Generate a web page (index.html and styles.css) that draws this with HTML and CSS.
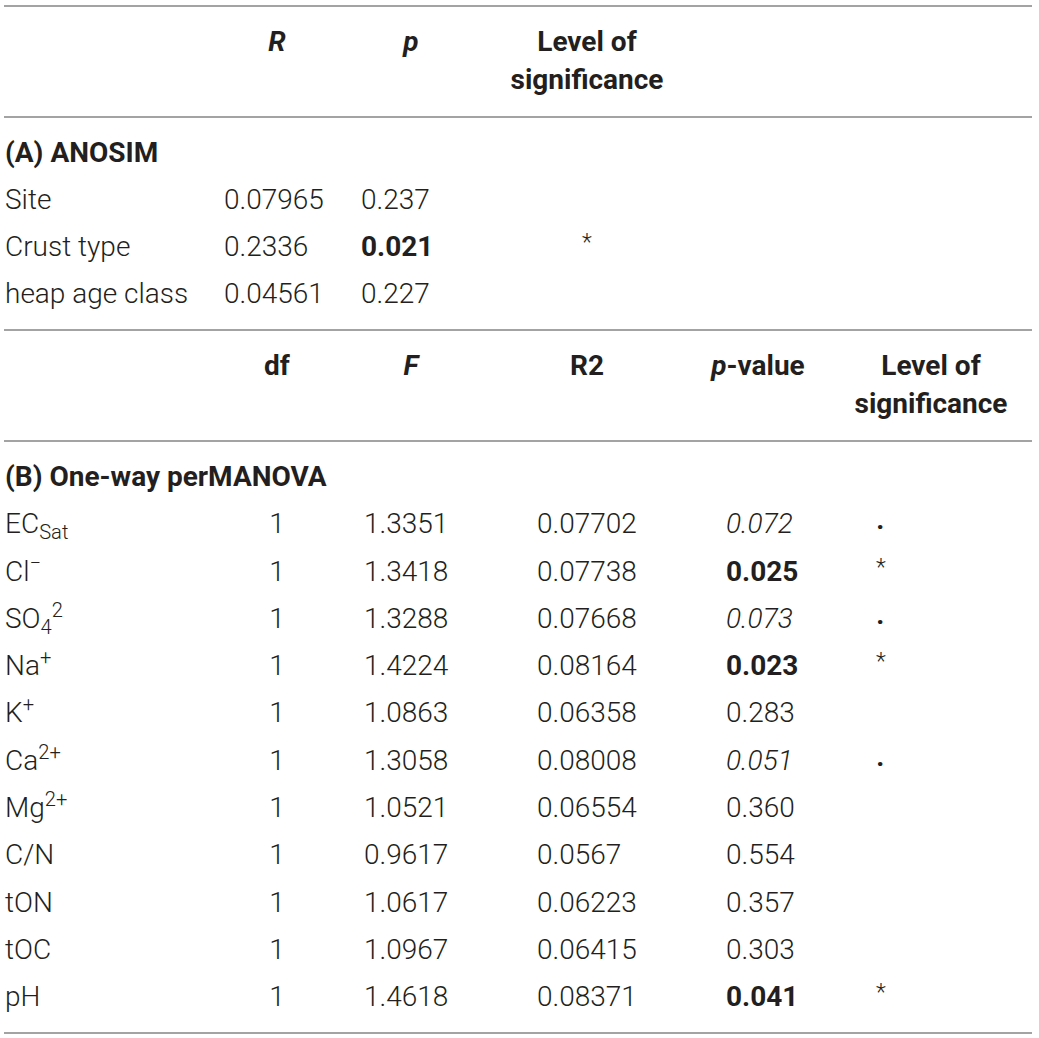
FILE: index.html
```html
<!DOCTYPE html>
<html lang="en">
<head>
  <meta charset="UTF-8" />
  <title>ANOSIM and perMANOVA results</title>
  <link rel="stylesheet" href="styles.css">
</head>
<body>
  <table class="stats">
    <colgroup>
      <col class="c1">
      <col class="c2">
      <col class="c3">
      <col class="c4">
      <col class="c5">
      <col class="c6">
    </colgroup>

    <tbody class="head">
      <tr>
        <th></th>
        <th><i>R</i></th>
        <th><i>p</i></th>
        <th>Level of<br>significance</th>
        <th></th>
        <th></th>
      </tr>
    </tbody>

    <tbody class="block">
      <tr class="section"><td colspan="6">(A) ANOSIM</td></tr>
      <tr>
        <td>Site</td>
        <td class="a2">0.07965</td>
        <td class="a3">0.237</td>
        <td class="mid"></td><td></td><td></td>
      </tr>
      <tr>
        <td>Crust type</td>
        <td class="a2">0.2336</td>
        <td class="a3"><b>0.021</b></td>
        <td class="mid"><span class="star">*</span></td><td></td><td></td>
      </tr>
      <tr>
        <td>heap age class</td>
        <td class="a2">0.04561</td>
        <td class="a3">0.227</td>
        <td class="mid"></td><td></td><td></td>
      </tr>
    </tbody>

    <tbody class="head">
      <tr>
        <th></th>
        <th>df</th>
        <th><i>F</i></th>
        <th>R2</th>
        <th><i>p</i>-value</th>
        <th>Level of<br>significance</th>
      </tr>
    </tbody>

    <tbody class="block b-long">
      <tr class="section"><td colspan="6">(B) One-way perMANOVA</td></tr>
      <tr><td>EC<sub>Sat</sub></td><td class="mid">1</td><td class="b3">1.3351</td><td class="b4">0.07702</td><td class="b5"><i>0.072</i></td><td class="b6"><span class="dot">·</span></td></tr>
      <tr><td>Cl<sup>−</sup></td><td class="mid">1</td><td class="b3">1.3418</td><td class="b4">0.07738</td><td class="b5"><b>0.025</b></td><td class="b6"><span class="star">*</span></td></tr>
      <tr><td>SO<sub>4</sub><sup>2</sup></td><td class="mid">1</td><td class="b3">1.3288</td><td class="b4">0.07668</td><td class="b5"><i>0.073</i></td><td class="b6"><span class="dot">·</span></td></tr>
      <tr><td>Na<sup>+</sup></td><td class="mid">1</td><td class="b3">1.4224</td><td class="b4">0.08164</td><td class="b5"><b>0.023</b></td><td class="b6"><span class="star">*</span></td></tr>
      <tr><td>K<sup>+</sup></td><td class="mid">1</td><td class="b3">1.0863</td><td class="b4">0.06358</td><td class="b5">0.283</td><td class="b6"></td></tr>
      <tr><td>Ca<sup>2+</sup></td><td class="mid">1</td><td class="b3">1.3058</td><td class="b4">0.08008</td><td class="b5"><i>0.051</i></td><td class="b6"><span class="dot">·</span></td></tr>
      <tr><td>Mg<sup>2+</sup></td><td class="mid">1</td><td class="b3">1.0521</td><td class="b4">0.06554</td><td class="b5">0.360</td><td class="b6"></td></tr>
      <tr><td>C/N</td><td class="mid">1</td><td class="b3">0.9617</td><td class="b4">0.0567</td><td class="b5">0.554</td><td class="b6"></td></tr>
      <tr><td>tON</td><td class="mid">1</td><td class="b3">1.0617</td><td class="b4">0.06223</td><td class="b5">0.357</td><td class="b6"></td></tr>
      <tr><td>tOC</td><td class="mid">1</td><td class="b3">1.0967</td><td class="b4">0.06415</td><td class="b5">0.303</td><td class="b6"></td></tr>
      <tr><td>pH</td><td class="mid">1</td><td class="b3">1.4618</td><td class="b4">0.08371</td><td class="b5"><b>0.041</b></td><td class="b6"><span class="star">*</span></td></tr>
    </tbody>
  </table>
</body>
</html>
```

FILE: styles.css
```css
* { box-sizing: border-box; }
body {
  margin: 0;
  padding: 0;
  background-color: #fff;
  color: #231f20;
  font-family: Roboto, "Liberation Sans", Arial, sans-serif;
  font-weight: 300;
  font-size: 28px;
}
.stats {
  width: 1028px;
  margin: 5px 0 0 4px;
  border-collapse: collapse;
  table-layout: fixed;
  border-bottom: 2px solid #a3a3a3;
}
.c1 { width: 216px; }
.c2 { width: 114px; }
.c3 { width: 154px; }
.c4 { width: 198px; }
.c5 { width: 144px; }
.c6 { width: 202px; }

.stats td,
.stats th {
  padding: 0;
  white-space: nowrap;
}
.stats td:first-child {
  padding-left: 1px;
}

/* header blocks */
.head {
  border-top: 2px solid #a3a3a3;
}
.head th {
  font-weight: 700;
  text-align: center;
  vertical-align: top;
  line-height: 38px;
  padding-top: 16px;
  padding-bottom: 17px;
}
.head th i {
  font-style: italic;
}

/* data blocks */
.block {
  border-top: 2px solid #a3a3a3;
}
.block td {
  line-height: 47px;
}
.b-long td {
  line-height: 47.3px;
}
.block tr:first-child td {
  padding-top: 11px;
}
.block tr:last-child td {
  padding-bottom: 12px;
}
.b-long tr:last-child td {
  padding-bottom: 11px;
}
.section td {
  font-weight: 700;
}

b {
  font-weight: 700;
}
i {
  font-style: italic;
}
sub,
sup {
  font-size: 0.72em;
  line-height: 0;
}
sub {
  vertical-align: -0.3em;
}
sup {
  vertical-align: 0.55em;
}

.star {
  font-size: 23px;
  line-height: 0;
  position: relative;
  top: -6px;
}
.dot {
  font-weight: 700;
  line-height: 0;
  position: relative;
  top: 3px;
}

.mid { text-align: center; }
.a2 { padding-left: 4px !important; }
.a3 { padding-left: 27px !important; }
.b3 { padding-left: 30px !important; }
.b4 { padding-left: 49px !important; }
.b5 { padding-left: 40px !important; }
.b6 { padding-left: 46px !important; }
```
